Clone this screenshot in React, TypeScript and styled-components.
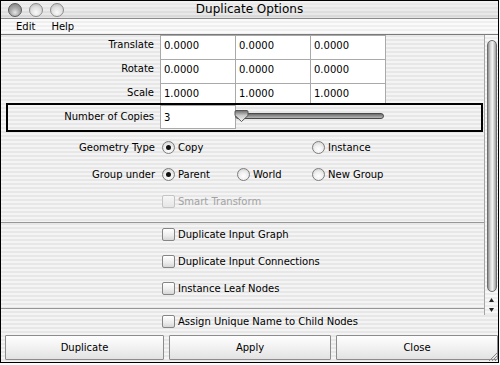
import styled, { createGlobalStyle, css } from "styled-components";

const GlobalStyle = createGlobalStyle`
  html, body {
    margin: 0;
    padding: 0;
    background: #fff;
  }
  body {
    font-family: "DejaVu Sans", "Lucida Grande", sans-serif;
    font-size: 10px;
    color: #000;
  }
`;

const pinstripe = css`
  background: repeating-linear-gradient(
    to bottom,
    #f4f4f4 0px,
    #f4f4f4 2px,
    #e7e7e7 2px,
    #e7e7e7 4px
  );
`;

const Window = styled.div`
  position: relative;
  width: 499px;
  height: 363px;
  box-sizing: border-box;
  border: 1px solid #000;
  display: flex;
  flex-direction: column;
  ${pinstripe}
`;

const TitleBar = styled.div`
  height: 17px;
  border-bottom: 1px solid #8a8a8a;
  display: grid;
  grid-template-columns: 1fr auto 1fr;
  align-items: center;
  background: repeating-linear-gradient(
      to bottom,
      rgba(255, 255, 255, 0.35) 0px,
      rgba(255, 255, 255, 0.35) 2px,
      rgba(0, 0, 0, 0) 2px,
      rgba(0, 0, 0, 0) 4px
    ),
    linear-gradient(#ececec, #d6d6d6);
`;

const Lights = styled.div`
  display: flex;
  gap: 7px;
  padding-left: 7px;
`;

const Light = styled.span<{ $active?: boolean }>`
  width: 14px;
  height: 14px;
  box-sizing: border-box;
  border-radius: 50%;
  border: 1px solid ${(p) => (p.$active ? "#5a5a5a" : "#8c8c8c")};
  background: ${(p) =>
    p.$active
      ? "radial-gradient(circle at 50% 70%, #e6e6e6 0%, #a8a8a8 45%, #7c7c7c 100%)"
      : "radial-gradient(circle at 50% 70%, #fafafa 0%, #dcdcdc 55%, #b4b4b4 100%)"};
`;

const Title = styled.div`
  font-size: 12px;
  line-height: 17px;
`;

const MenuBar = styled.div`
  height: 15px;
  border-bottom: 1px solid #7a7a7a;
  display: flex;
  align-items: center;
  gap: 16px;
  padding-left: 15px;
  background: repeating-linear-gradient(
    to bottom,
    #fafafa 0px,
    #fafafa 2px,
    #efefef 2px,
    #efefef 4px
  );
`;

const MenuItem = styled.span`
  font-size: 10px;
`;

const Main = styled.div`
  height: 280px;
  display: flex;
`;

const Content = styled.div`
  flex: 1;
  overflow: hidden;
  display: flex;
  flex-direction: column;
`;

const FieldGrid = styled.div`
  display: grid;
  grid-template-columns: 159px 75px 75px 75px;
  grid-template-rows: 24px 24px 20px;
`;

const Label = styled.div`
  text-align: right;
  padding-right: 6px;
  padding-top: 3px;
  line-height: 13px;
`;

const Field = styled.div`
  width: 76px;
  height: calc(100% + 1px);
  box-sizing: border-box;
  border: 1px solid #a9a9a9;
  background: #fff;
  padding: 3px 0 0 3px;
  line-height: 13px;
`;

const CopiesBox = styled.div`
  margin-left: 5px;
  width: 477px;
  height: 29px;
  box-sizing: border-box;
  border: 2px solid #000;
  display: grid;
  grid-template-columns: 152px 75px 150px;
  align-items: start;
`;

const CopiesLabel = styled(Label)`
  padding-top: 5px;
`;

const CopiesField = styled(Field)`
  height: 24px;
  padding-top: 5px;
`;

const Slider = styled.div`
  position: relative;
  height: 24px;
`;

const Groove = styled.div`
  margin: 8px 1px 0 0;
  height: 4px;
  border: 1px solid #4a4a4a;
  border-radius: 3px;
  background: linear-gradient(#6c6c6c, #b8b8b8);
`;

const Thumb = styled.svg`
  position: absolute;
  left: -1px;
  top: 4px;
`;

const RadioGroup = styled.div`
  padding-top: 2px;
`;

const OptionRow = styled.div`
  height: 27px;
  display: grid;
  grid-template-columns: 161px 75px 75px 75px;
  align-items: center;
`;

const RowLabel = styled.div`
  text-align: right;
  padding-right: 7px;
`;

const Option = styled.label<{ $col: number }>`
  grid-column: ${(p) => p.$col};
  display: flex;
  align-items: center;
  gap: 3px;
  white-space: nowrap;
`;

const Radio = styled.span<{ $checked?: boolean }>`
  width: 13px;
  height: 13px;
  flex: none;
  box-sizing: border-box;
  border-radius: 50%;
  border: 1px solid #7d7d7d;
  background: radial-gradient(circle at 50% 65%, #ffffff 0%, #f0f0f0 45%, #c9c9c9 100%);
  display: flex;
  align-items: center;
  justify-content: center;
  &::after {
    content: "";
    width: 5px;
    height: 5px;
    border-radius: 50%;
    background: #111;
    display: ${(p) => (p.$checked ? "block" : "none")};
  }
`;

const Check = styled.span<{ $disabled?: boolean }>`
  width: 13px;
  height: 13px;
  flex: none;
  box-sizing: border-box;
  border-radius: 2px;
  border: 1px solid ${(p) => (p.$disabled ? "#c4c4c4" : "#858585")};
  background: ${(p) =>
    p.$disabled
      ? "linear-gradient(#f6f6f6, #e6e6e6)"
      : "linear-gradient(#ffffff, #ececec 60%, #d6d6d6)"};
`;

const OptionText = styled.span<{ $disabled?: boolean }>`
  color: ${(p) => (p.$disabled ? "#a3a3a3" : "#000")};
`;

const Separator = styled.div<{ $top: number }>`
  height: 1px;
  margin-top: ${(p) => p.$top}px;
  background: #979797;
  flex: none;
`;

const CheckRow = styled.label`
  height: 27px;
  box-sizing: border-box;
  padding: 5px 0 0 161px;
  display: flex;
  align-items: flex-start;
  gap: 3px;
  line-height: 13px;
  flex: none;
`;

const Scrollbar = styled.div`
  width: 14px;
  box-sizing: border-box;
  border-left: 1px solid #a6a6a6;
  display: flex;
  flex-direction: column;
  align-items: center;
  padding-top: 5px;
  background: repeating-linear-gradient(
    to bottom,
    #f7f7f7 0px,
    #f7f7f7 2px,
    #ececec 2px,
    #ececec 4px
  );
`;

const ScrollThumb = styled.div`
  width: 10px;
  height: 252px;
  box-sizing: border-box;
  border-radius: 5px;
  border: 1px solid #6e6e6e;
  background: linear-gradient(
    to right,
    #8e8e8e 0%,
    #d2d2d2 30%,
    #f2f2f2 55%,
    #c4c4c4 80%,
    #9a9a9a 100%
  );
`;

const ArrowButton = styled.div<{ $h: number; $gap?: number }>`
  height: ${(p) => p.$h}px;
  margin-top: ${(p) => p.$gap ?? 0}px;
  display: flex;
  align-items: center;
  justify-content: center;
`;

const AssignRow = styled(CheckRow)`
  height: 20px;
  padding-top: 0;
`;

const ButtonBar = styled.div`
  height: 25px;
  display: grid;
  grid-template-columns: 159px 162px 162px;
  gap: 5px;
  padding-left: 4px;
`;

const Button = styled.button`
  height: 25px;
  box-sizing: border-box;
  border: 1px solid #8c8c8c;
  border-radius: 1px;
  background: linear-gradient(#fefefe, #f0f0f0 55%, #e2e2e2);
  font-family: inherit;
  font-size: 10px;
  color: #000;
  padding: 0;
`;

const Grip = styled.svg`
  position: absolute;
  right: 0;
  bottom: 0;
`;

const SliderThumb = () => (
  <Thumb width="15" height="14" viewBox="0 0 15 14">
    <defs>
      <linearGradient id="thumbFill" x1="0" y1="0" x2="0" y2="1">
        <stop offset="0" stopColor="#6a6a6a" />
        <stop offset="0.45" stopColor="#c8c8c8" />
        <stop offset="1" stopColor="#f6f6f6" />
      </linearGradient>
    </defs>
    <path
      d="M2 1.5 H13 Q14 1.5 14 3 V6.5 L7.5 12.5 L1 6.5 V3 Q1 1.5 2 1.5 Z"
      fill="url(#thumbFill)"
      stroke="#555"
      strokeWidth="1"
    />
  </Thumb>
);

const Triangle = ({ up }: { up?: boolean }) => (
  <svg width="5" height="4" viewBox="0 0 5 4">
    <path d={up ? "M2.5 0 L5 4 L0 4 Z" : "M0 0 L5 0 L2.5 4 Z"} fill="#222" />
  </svg>
);

const App = () => (
  <>
    <GlobalStyle />
    <Window>
      <TitleBar>
        <Lights>
          <Light $active />
          <Light />
          <Light />
        </Lights>
        <Title>Duplicate Options</Title>
        <div />
      </TitleBar>
      <MenuBar>
        <MenuItem>Edit</MenuItem>
        <MenuItem>Help</MenuItem>
      </MenuBar>
      <Main>
        <Content>
          <FieldGrid>
            <Label>Translate</Label>
            <Field>0.0000</Field>
            <Field>0.0000</Field>
            <Field>0.0000</Field>
            <Label>Rotate</Label>
            <Field>0.0000</Field>
            <Field>0.0000</Field>
            <Field>0.0000</Field>
            <Label>Scale</Label>
            <Field>1.0000</Field>
            <Field>1.0000</Field>
            <Field>1.0000</Field>
          </FieldGrid>
          <CopiesBox>
            <CopiesLabel>Number of Copies</CopiesLabel>
            <CopiesField>3</CopiesField>
            <Slider>
              <Groove />
              <SliderThumb />
            </Slider>
          </CopiesBox>
          <RadioGroup>
            <OptionRow>
              <RowLabel>Geometry Type</RowLabel>
              <Option $col={2}>
                <Radio $checked />
                <OptionText>Copy</OptionText>
              </Option>
              <Option $col={4}>
                <Radio />
                <OptionText>Instance</OptionText>
              </Option>
            </OptionRow>
            <OptionRow>
              <RowLabel>Group under</RowLabel>
              <Option $col={2}>
                <Radio $checked />
                <OptionText>Parent</OptionText>
              </Option>
              <Option $col={3}>
                <Radio />
                <OptionText>World</OptionText>
              </Option>
              <Option $col={4}>
                <Radio />
                <OptionText>New Group</OptionText>
              </Option>
            </OptionRow>
            <OptionRow>
              <div />
              <Option $col={2}>
                <Check $disabled />
                <OptionText $disabled>Smart Transform</OptionText>
              </Option>
            </OptionRow>
          </RadioGroup>
          <Separator $top={7} />
          <CheckRow>
            <Check />
            <OptionText>Duplicate Input Graph</OptionText>
          </CheckRow>
          <CheckRow>
            <Check />
            <OptionText>Duplicate Input Connections</OptionText>
          </CheckRow>
          <CheckRow>
            <Check />
            <OptionText>Instance Leaf Nodes</OptionText>
          </CheckRow>
          <Separator $top={4} />
        </Content>
        <Scrollbar>
          <ScrollThumb />
          <ArrowButton $h={11} $gap={2}>
            <Triangle up />
          </ArrowButton>
          <ArrowButton $h={10}>
            <Triangle />
          </ArrowButton>
        </Scrollbar>
      </Main>
      <AssignRow>
        <Check />
        <OptionText>Assign Unique Name to Child Nodes</OptionText>
      </AssignRow>
      <ButtonBar>
        <Button>Duplicate</Button>
        <Button>Apply</Button>
        <Button>Close</Button>
      </ButtonBar>
      <Grip width="11" height="11" viewBox="0 0 11 11">
        <path d="M10 2 L2 10 M10 5 L5 10 M10 8 L8 10" stroke="#8a8a8a" strokeWidth="1" />
      </Grip>
    </Window>
  </>
);

export default App;
